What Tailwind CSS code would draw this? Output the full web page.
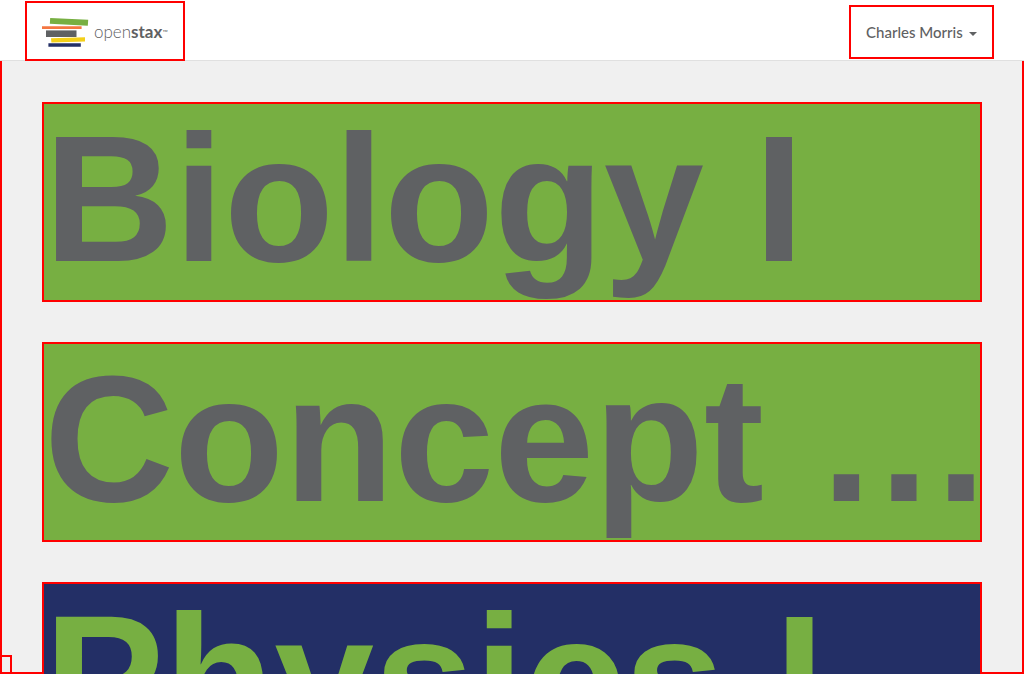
<!DOCTYPE html>
<html lang="en">
<head>
<meta charset="utf-8">
<meta name="viewport" content="width=device-width, initial-scale=1">
<title>OpenStax Tutor</title>
<script src="https://cdn.jsdelivr.net/npm/@tailwindcss/browser@4"></script>
</head>
<body class="flex h-screen flex-col overflow-hidden bg-[#f0f0f0] font-['Lato',sans-serif] text-[#5f6163]">
<header class="flex h-[61px] shrink-0 items-start justify-between border-b border-[#e0e0e0] bg-white pr-[30px] pl-[25px]">
  <a href="#" aria-label="OpenStax" class="mt-px flex h-[60px] w-40 items-center border-2 border-[#ff0000] pt-1 pl-[15px]">
    <svg class="h-8 w-12 shrink-0" viewBox="0 0 48 32" aria-hidden="true">
      <path fill="#77af42" d="M8.2 1 46.2 2.8 45.8 8.8 7.8 6.7Z"/>
      <path fill="#f47641" d="M0 9.2H39.6V12H0Z"/>
      <path fill="#5f6163" d="M4 13.4H34.5V20H4Z"/>
      <path fill="#f4d019" d="M9 21.2 43 20.3V24.6L9.4 25.5Z"/>
      <path fill="#232f66" d="M6.4 26.2H38.8V29.8H6.4Z"/>
    </svg>
    <span class="ml-1 flex items-center pb-0.5 whitespace-nowrap text-[17px] leading-5"><span class="font-light">open</span><span class="font-bold">stax</span><span class="text-[7px] leading-none">™</span></span>
  </a>
  <button type="button" class="mt-[5px] flex h-[54px] w-[145px] items-center border-2 border-[#ff0000] pl-[15px] text-[15px] font-medium whitespace-nowrap">Charles Morris
    <svg class="mt-1 ml-1.5 h-1 w-2" viewBox="0 0 8 4" aria-hidden="true"><path fill="currentColor" d="M0 0H8L4 4Z"/></svg>
  </button>
</header>
<main class="relative min-h-0 flex-1 overflow-hidden border-x-2 border-[#ff0000] px-10 pt-[41px] shadow-[inset_0_-2px_0_#ff0000]">
  <div class="flex flex-col gap-10 font-['Liberation_Sans',sans-serif] text-[180px] leading-[190px] font-bold whitespace-nowrap">
    <a href="#" class="block h-[200px] overflow-hidden border-2 border-[#ff0000] bg-[#77af42]">Biology I</a>
    <a href="#" class="block h-[200px] overflow-hidden border-2 border-[#ff0000] bg-[#77af42]">Concept …</a>
    <a href="#" class="block h-[200px] overflow-hidden border-2 border-[#ff0000] bg-[#232f66] text-[#77af42]">Physics I</a>
  </div>
  <div class="absolute bottom-0 -left-0.5 h-[19px] w-3 border-2 border-[#ff0000]"></div>
</main>
</body>
</html>
